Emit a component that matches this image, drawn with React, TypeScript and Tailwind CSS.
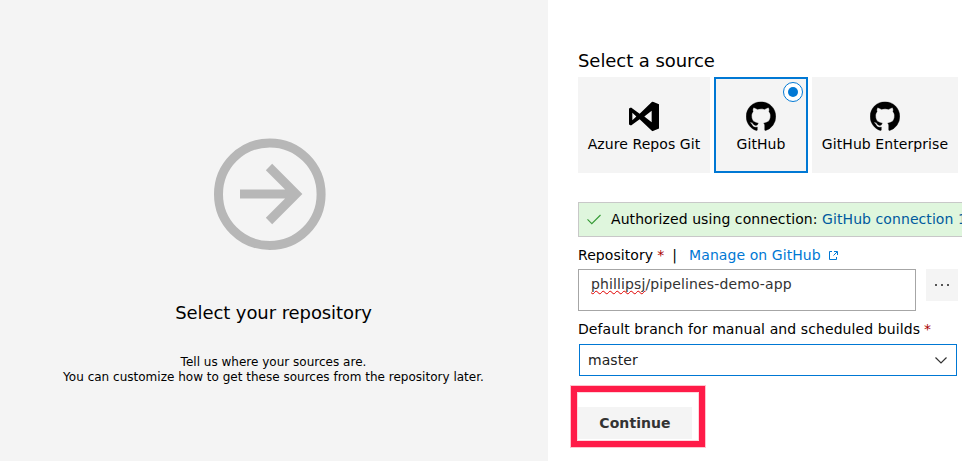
import React from "react";

const OCTOCAT =
  "M8 0C3.58 0 0 3.58 0 8c0 3.54 2.29 6.53 5.47 7.59.4.07.55-.17.55-.38 0-.19-.01-.82-.01-1.49-2.01.37-2.53-.49-2.69-.94-.09-.23-.48-.94-.82-1.13-.28-.15-.68-.52-.01-.53.63-.01 1.08.58 1.23.82.72 1.21 1.87.87 2.33.66.07-.52.28-.87.51-1.07-1.78-.2-3.64-.89-3.64-3.95 0-.87.31-1.59.82-2.15-.08-.2-.36-1.02.08-2.12 0 0 .67-.21 2.2.82.64-.18 1.32-.27 2-.27s1.36.09 2 .27c1.53-1.04 2.2-.82 2.2-.82.44 1.1.16 1.92.08 2.12.51.56.82 1.27.82 2.15 0 3.07-1.87 3.75-3.65 3.95.29.25.54.73.54 1.48 0 1.07-.01 1.93-.01 2.2 0 .21.15.46.55.38A8.01 8.01 0 0 0 16 8c0-4.42-3.58-8-8-8z";

function GitHubMark() {
  return (
    <svg className="h-[30px] w-[30px] translate-y-[0.5px]" viewBox="-0.1 -0.1 16.2 16.2" fill="#000" stroke="#000" strokeWidth="0.2">
      <path d={OCTOCAT} />
    </svg>
  );
}

function AzureReposMark() {
  return (
    <svg className="h-[30px] w-[30px] translate-y-[0.5px]" viewBox="0 0 90 90" fill="#000" fillRule="evenodd">
      <path d="M6 18 32 37 70 0 90 8V81L70 89 32 53 6 72 0 69V21ZM10 34V56L22 45ZM68 28V62L46 45Z" />
    </svg>
  );
}

function Source({ label, width, selected, children }: { label: string; width: string; selected?: boolean; children: React.ReactNode }) {
  return (
    <div
      className={`relative flex h-24 shrink-0 flex-col items-center gap-[3px] bg-[#f4f4f4] ${width} ${
        selected ? "border-2 border-[#0078d4] pt-[22px]" : "pt-6"
      }`}
    >
      {children}
      <span className="leading-5 whitespace-nowrap">{label}</span>
      {selected && (
        <svg className="absolute top-[3px] right-[3px] h-5 w-5" viewBox="0 0 20 20">
          <circle cx="10" cy="10" r="9.5" fill="#fff" stroke="#0078d4" />
          <circle cx="10" cy="10" r="5" fill="#0078d4" />
        </svg>
      )}
    </div>
  );
}

export default function App() {
  return (
    <div className="flex h-[461px] w-[962px] overflow-hidden bg-white font-['DejaVu_Sans',sans-serif] text-sm text-black">
      <section className="flex w-[548px] shrink-0 flex-col items-center bg-[#f4f4f4] pt-[138px] text-center">
        <svg className="mr-2 h-[112px] w-[112px]" viewBox="0 0 112 112" fill="none" stroke="#b7b7b7" strokeWidth="9">
          <circle cx="55.8" cy="56.2" r="51.3" />
          <path d="M26 56H84M55 29 82 56 55 83" />
        </svg>
        <h1 className="mt-[51px] mr-[1px] text-lg leading-6 tracking-[-0.08px]">Select your repository</h1>
        <p className="mt-[30px] mr-[1px] text-xs leading-[15px] tracking-[0.01px]">
          Tell us where your sources are.
          <br />
          You can customize how to get these sources from the repository later.
        </p>
      </section>

      <main className="w-[414px] shrink-0 overflow-hidden pt-[49px] pl-[30px] tracking-[0.075px]">
        <h2 className="text-lg leading-6 tracking-[-0.06px]">Select a source</h2>
        <div className="mt-1 flex gap-1">
          <Source label="Azure Repos Git" width="w-[132px]">
            <AzureReposMark />
          </Source>
          <Source label="GitHub" width="w-[94px]" selected>
            <GitHubMark />
          </Source>
          <Source label="GitHub Enterprise" width="w-[146px]">
            <GitHubMark />
          </Source>
        </div>

        <div className="mt-[29px] flex h-[35px] w-[420px] border border-[#c8c8c8] bg-[#dff6dd] pt-[6px] pl-2 leading-5 whitespace-nowrap">
          <svg className="mt-[5px] mr-[10px] h-[11px] w-[14px]" viewBox="0 0 14 11" fill="none" stroke="#339933" strokeWidth="1.1">
            <path d="M.5 5.3 4.8 9.6 13.5 1" />
          </svg>
          <span>Authorized using connection:&nbsp;</span>
          <span className="text-[#005a9e]">GitHub connection 1</span>
        </div>

        <div className="mt-2 flex h-5 items-center leading-5 whitespace-nowrap">
          <span>Repository</span>
          <span className="ml-1 text-[#a80000]">*</span>
          <span className="ml-2">|</span>
          <a className="ml-3 text-[#0078d4]">Manage on GitHub</a>
          <svg className="ml-2 h-[9px] w-[9px]" viewBox="0 0 9 9" fill="none" stroke="#0078d4">
            <path d="M3 .5H.5V8.5H7.5V6M5 .5H8.5V4M8.2.8 4.5 4.5" />
          </svg>
        </div>

        <div className="mt-1 flex items-start gap-[10px]">
          <div className="h-[42px] w-[338px] border border-[#a6a6a6] pt-1 pl-3 leading-5 tracking-[0.12px] text-[#333]">
            <span className="underline decoration-[#e00000] decoration-wavy decoration-[1px] underline-offset-[1px] [text-decoration-skip-ink:none]">phillipsj</span>
            /pipelines-demo-app
          </div>
          <button className="flex h-8 w-8 items-center justify-center gap-[4px] bg-[#f4f4f4]">
            <i className="h-[2px] w-[2px] bg-[#555]" />
            <i className="h-[2px] w-[2px] bg-[#555]" />
            <i className="h-[2px] w-[2px] bg-[#555]" />
          </button>
        </div>

        <div className="mt-2 leading-5 tracking-[0.09px] whitespace-nowrap">
          Default branch for manual and scheduled builds<span className="ml-1 text-[#a80000]">*</span>
        </div>
        <div className="mt-[5px] ml-[1px] flex h-8 w-[378px] justify-between border border-[#0078d4] pt-[5px] pr-[9px] pl-2 leading-5 text-[#222]">
          <span>master</span>
          <svg className="mt-[7px] h-[7px] w-[12px]" viewBox="0 0 12 7" fill="none" stroke="#333" strokeWidth="1.2">
            <path d="M.5.5 6 6 11.5.5" />
          </svg>
        </div>

        <div className="mt-[9px] -ml-2 h-[63px] w-[136px] border border-[#ffc4ce]">
          <div className="h-[61px] w-[134px] border-6 border-[#ff1b48]">
            <div className="h-[49px] w-[122px] border border-[#ffd5dc] pt-[14px]">
              <button className="block h-8 w-[114px] bg-[#f4f4f4] font-bold text-[#333]">Continue</button>
            </div>
          </div>
        </div>
      </main>
    </div>
  );
}
